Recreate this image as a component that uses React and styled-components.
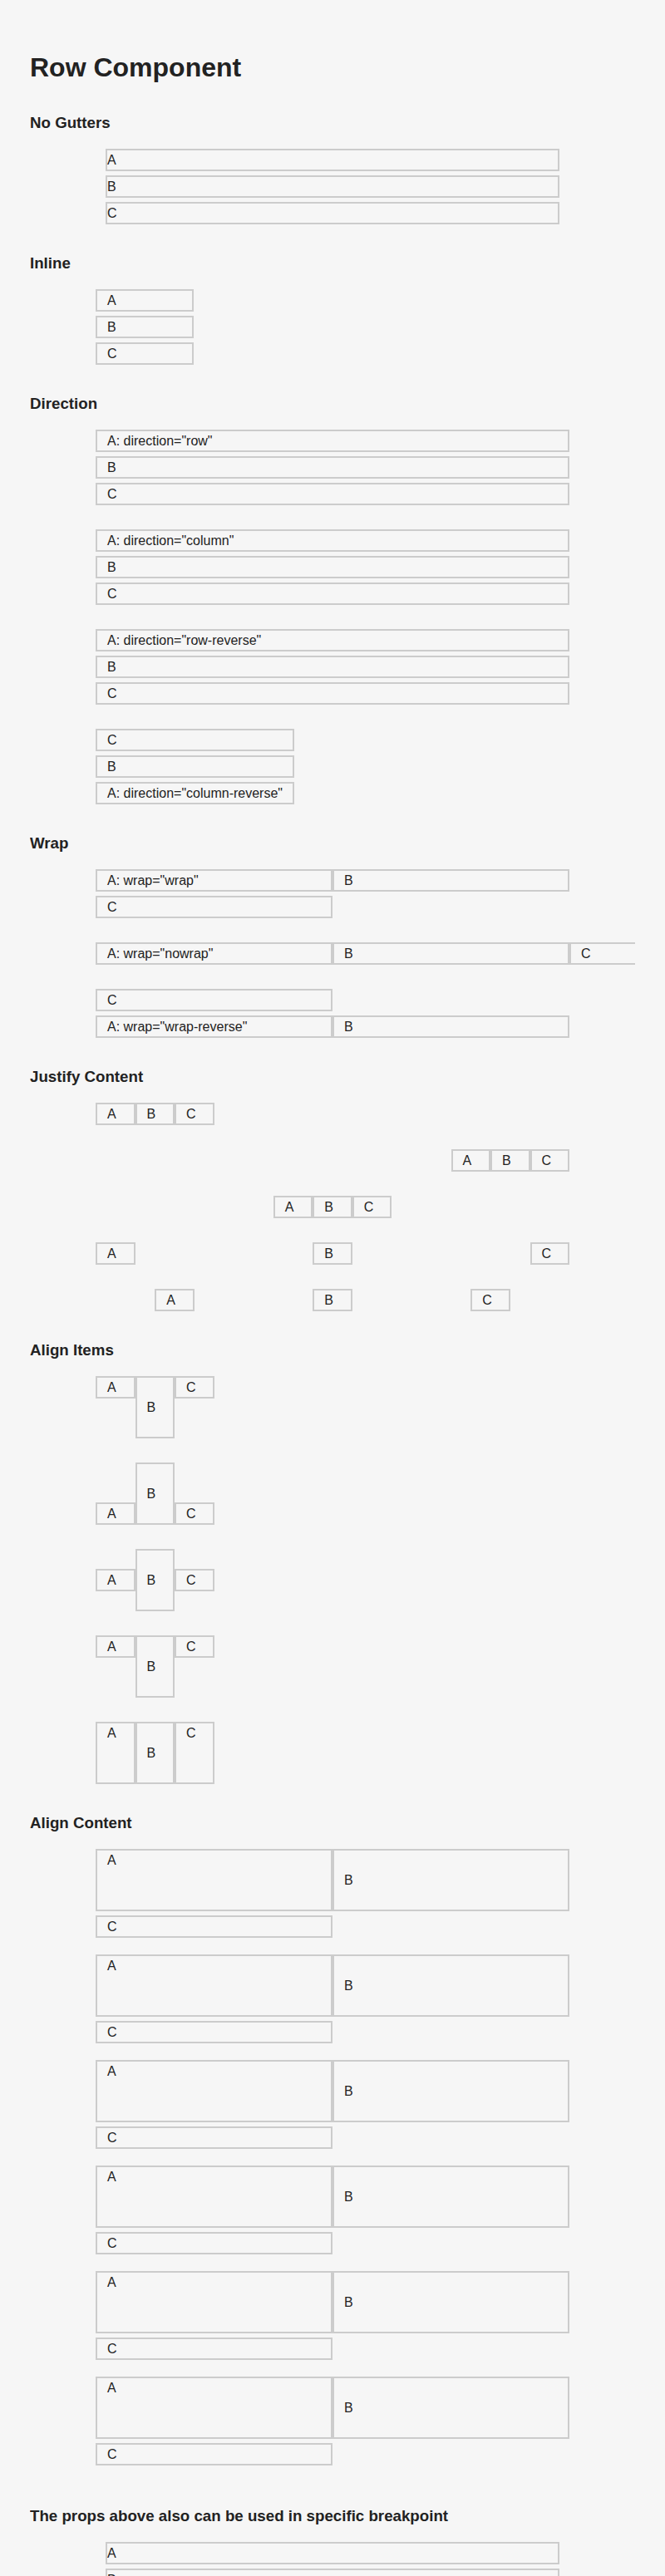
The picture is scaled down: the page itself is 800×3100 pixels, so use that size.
import React from 'react'
import styled, { createGlobalStyle } from 'styled-components'

const GlobalStyle = createGlobalStyle`
  body {
    margin: 0;
    background: #f6f6f6;
    color: #222;
    font-family: 'Liberation Sans', Arial, sans-serif;
  }
`

const Page = styled.div`
  padding: 63px 36px 40px;
`

const Inner = styled.div`
  overflow: hidden;
`

const Title = styled.h1`
  margin: 0 0 37px;
  font-size: 32px;
  line-height: 37px;
  font-weight: 700;
`

const Section = styled.section`
  margin-bottom: 36px;
`

const SectionTitle = styled.h3`
  margin: 0 0 20px;
  font-size: 18.72px;
  line-height: 22px;
  font-weight: 700;
`

const Container = styled.div`
  width: 570px;
  margin: 0 auto;
  display: flex;
  flex-direction: column;
  gap: ${(p) => (p.$gap ?? 29)}px;
`

const Row = styled.div`
  display: flex;
  flex-direction: ${(p) => p.$dir || 'row'};
  flex-wrap: ${(p) => p.$wrap || 'wrap'};
  justify-content: ${(p) => p.$justify || 'flex-start'};
  align-items: ${(p) => p.$align || 'stretch'};
  align-content: ${(p) => p.$content || 'normal'};
  row-gap: 5px;
  width: ${(p) => p.$width || 'auto'};
  height: ${(p) => (p.$height ? `${p.$height}px` : 'auto')};
  padding: 0 ${(p) => p.$inset || 0}px;
`

const Cell = styled.div`
  box-sizing: border-box;
  flex: 0 0 auto;
  width: ${(p) => (p.$span ? `${(p.$span / 12) * 100}%` : 'auto')};
  height: ${(p) => (p.$h ? `${p.$h}px` : 'auto')};
  padding: ${(p) => (p.$flush ? '1px 0 0' : '1px 12px 0')};
  border: 2px solid #ccc;
  font-size: 16px;
  line-height: 22px;
  white-space: nowrap;
  ${(p) => p.$middle && 'display: flex; align-items: center;'}
`

const directions = [
  { dir: 'row', items: ['A: direction="row"', 'B', 'C'], span: 12 },
  { dir: 'column', items: ['A: direction="column"', 'B', 'C'] },
  { dir: 'row-reverse', items: ['A: direction="row-reverse"', 'B', 'C'], span: 12 },
  { dir: 'column-reverse', items: ['A: direction="column-reverse"', 'B', 'C'], width: 'fit-content' },
]

const wraps = ['wrap', 'nowrap', 'wrap-reverse']
const justifies = ['flex-start', 'flex-end', 'center', 'space-between', 'space-around']
const aligns = ['flex-start', 'flex-end', 'center', 'flex-start', 'stretch']

const Plain = () => (
  <Row $dir='column' $inset={12}>
    <Cell $flush>A</Cell>
    <Cell $flush>B</Cell>
    <Cell $flush>C</Cell>
  </Row>
)

const App = () => {
  return (
    <Page>
      <GlobalStyle />
      <Inner>
        <Title>Row Component</Title>

        <Section>
          <SectionTitle>No Gutters</SectionTitle>
          <Container>
            <Plain />
          </Container>
        </Section>

        <Section>
          <SectionTitle>Inline</SectionTitle>
          <Container>
            <Row $dir='column' $width='118px'>
              <Cell>A</Cell>
              <Cell>B</Cell>
              <Cell>C</Cell>
            </Row>
          </Container>
        </Section>

        <Section>
          <SectionTitle>Direction</SectionTitle>
          <Container>
            {directions.map((d) => (
              <Row key={d.dir} $dir={d.dir} $width={d.width}>
                {d.items.map((t) => (
                  <Cell key={t} $span={d.span}>
                    {t}
                  </Cell>
                ))}
              </Row>
            ))}
          </Container>
        </Section>

        <Section>
          <SectionTitle>Wrap</SectionTitle>
          <Container>
            {wraps.map((w) => (
              <Row key={w} $wrap={w}>
                <Cell $span={6}>A: wrap="{w}"</Cell>
                <Cell $span={6}>B</Cell>
                <Cell $span={6}>C</Cell>
              </Row>
            ))}
          </Container>
        </Section>

        <Section>
          <SectionTitle>Justify Content</SectionTitle>
          <Container>
            {justifies.map((j) => (
              <Row key={j} $justify={j}>
                <Cell $span={1}>A</Cell>
                <Cell $span={1}>B</Cell>
                <Cell $span={1}>C</Cell>
              </Row>
            ))}
          </Container>
        </Section>

        <Section>
          <SectionTitle>Align Items</SectionTitle>
          <Container>
            {aligns.map((a, i) => (
              <Row key={i} $align={a}>
                <Cell $span={1}>A</Cell>
                <Cell $span={1} $h={75} $middle>
                  B
                </Cell>
                <Cell $span={1}>C</Cell>
              </Row>
            ))}
          </Container>
        </Section>

        <Section>
          <SectionTitle>Align Content</SectionTitle>
          <Container $gap={6}>
            {[0, 1, 2, 3, 4, 5].map((i) => (
              <Row key={i} $height={121} $content='flex-start'>
                <Cell $span={6} $h={75}>
                  A
                </Cell>
                <Cell $span={6} $h={75} $middle>
                  B
                </Cell>
                <Cell $span={6}>C</Cell>
              </Row>
            ))}
          </Container>
        </Section>

        <Section>
          <SectionTitle>The props above also can be used in specific breakpoint</SectionTitle>
          <Container>
            <Plain />
          </Container>
        </Section>
      </Inner>
    </Page>
  )
}

export default App
